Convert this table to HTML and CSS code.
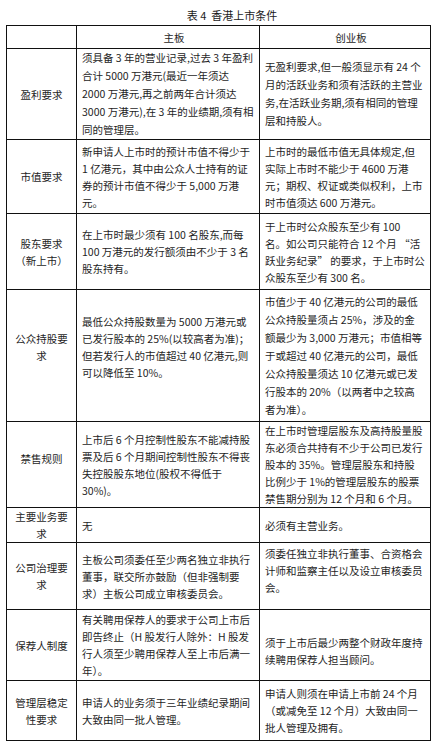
FILE: index.html
```html
<!DOCTYPE html>
<html lang="zh-CN">
<head>
<meta charset="utf-8">
<title>表4 香港上市条件</title>
<link rel="stylesheet" href="styles.css">
</head>
<body>
<div class="caption">表 4&nbsp; 香港上市条件</div>
<table class="listing">
  <colgroup>
    <col class="c-name">
    <col class="c-main">
    <col class="c-gem">
  </colgroup>
  <tr class="r-head">
    <td></td>
    <td class="head">主板</td>
    <td class="head">创业板</td>
  </tr>
  <tr class="r1">
    <td class="name">盈利要求</td>
    <td class="tall">须具备 3 年的营业记录,过去 3 年盈利<br>合计 5000 万港元(最近一年须达<br>2000 万港元,再之前两年合计须达<br>3000 万港元),在 3 年的业绩期,须有相<br>同的管理层。</td>
    <td class="tall">无盈利要求,但一般须显示有 24 个<br>月的活跃业务和须有活跃的主营业<br>务,在活跃业务期,须有相同的管理<br>层和持股人。</td>
  </tr>
  <tr class="r2">
    <td class="name">市值要求</td>
    <td>新申请人上市时的预计市值不得少于<br>1 亿港元，其中由公众人士持有的证<br>券的预计市值不得少于 5,000 万港<br>元。</td>
    <td>上市时的最低市值无具体规定,但<br>实际上市时不能少于 4600 万港<br>元；期权、权证或类似权利，上市<br>时市值须达 600 万港元。</td>
  </tr>
  <tr class="r3">
    <td class="name">股东要求<br>（新上市）</td>
    <td>在上市时最少须有 100 名股东,而每<br>100 万港元的发行额须由不少于 3 名<br>股东持有。</td>
    <td>于上市时公众股东至少有 100<br>名。如公司只能符合 12 个月 “活<br>跃业务纪录” 的要求，于上市时公<br>众股东至少有 300 名。</td>
  </tr>
  <tr class="r4">
    <td class="name lift">公众持股要<br>求</td>
    <td class="lift">最低公众持股数量为 5000 万港元或<br>已发行股本的 25%(以较高者为准)；<br>但若发行人的市值超过 40 亿港元,则<br>可以降低至 10%。</td>
    <td class="tall">市值少于 40 亿港元的公司的最低<br>公众持股量须占 25%，涉及的金<br>额最少为 3,000 万港元；市值相等<br>于或超过 40 亿港元的公司，最低<br>公众持股量须达 10 亿港元或已发<br>行股本的 20%（以两者中之较高<br>者为准）。</td>
  </tr>
  <tr class="r5">
    <td class="name lift-s">禁售规则</td>
    <td>上市后 6 个月控制性股东不能减持股<br>票及后 6 个月期间控制性股东不得丧<br>失控股股东地位(股权不得低于<br>30%)。</td>
    <td>在上市时管理层股东及高持股量股<br>东必须合共持有不少于公司已发行<br>股本的 35%。管理层股东和持股<br>比例少于 1%的管理层股东的股票<br>禁售期分别为 12 个月和 6 个月。</td>
  </tr>
  <tr class="r6">
    <td class="name">主要业务要<br>求</td>
    <td>无</td>
    <td>必须有主营业务。</td>
  </tr>
  <tr class="r7">
    <td class="name">公司治理要<br>求</td>
    <td>主板公司须委任至少两名独立非执行<br>董事，联交所亦鼓励（但非强制要<br>求）主板公司成立审核委员会。</td>
    <td class="lift-s">须委任独立非执行董事、合资格会<br>计师和监察主任以及设立审核委员<br>会。</td>
  </tr>
  <tr class="r8">
    <td class="name">保荐人制度</td>
    <td>有关聘用保荐人的要求于公司上市后<br>即告终止（H 股发行人除外：H 股发<br>行人须至少聘用保荐人至上市后满一<br>年）。</td>
    <td class="drop">须于上市后最少两整个财政年度持<br>续聘用保荐人担当顾问。</td>
  </tr>
  <tr class="r9">
    <td class="name">管理层稳定<br>性要求</td>
    <td>申请人的业务须于三年业绩纪录期间<br>大致由同一批人管理。</td>
    <td>申请人则须在申请上市前 24 个月<br>（或减免至 12 个月）大致由同一<br>批人管理及拥有。</td>
  </tr>
</table>
</body>
</html>
```

FILE: styles.css
```css
html, body {
  margin: 0;
  padding: 0;
  background: #ffffff;
}

body {
  font-family: "Noto Sans CJK SC", "Noto Sans", sans-serif;
  color: #1e1e1e;
  width: 434px;
}

.caption {
  font-size: 11px;
  line-height: 18px;
  padding: 6px 0 1px 30px;
  text-align: center;
  color: #1a1a1a;
}

.listing {
  margin-left: 6px;
  border-collapse: collapse;
  table-layout: fixed;
  width: 424px;
  font-size: 10.5px;
  line-height: 17px;
}

.c-name { width: 70px; }
.c-main { width: 183px; }
.c-gem { width: 171px; }

.listing td {
  border: 1px solid #111;
  padding: 0 4px 0 5px;
  vertical-align: middle;
  white-space: nowrap;
  overflow: hidden;
}

.listing td.name {
  text-align: center;
  padding: 0;
}

.listing td.head {
  text-align: center;
  padding-left: 16px;
}

.listing td.tall { line-height: 18px; }
.listing td.lift { padding-bottom: 18px; }
.listing td.lift-s { padding-bottom: 12px; }
.listing td.drop { padding-top: 12px; }

.r-head { height: 23px; }
.r1 { height: 90px; }
.r2 { height: 74px; }
.r3 { height: 76px; }
.r4 { height: 132px; }
.r5 { height: 85px; }
.r6 { height: 35px; }
.r7 { height: 67px; }
.r8 { height: 71px; }
.r9 { height: 60px; }
```
